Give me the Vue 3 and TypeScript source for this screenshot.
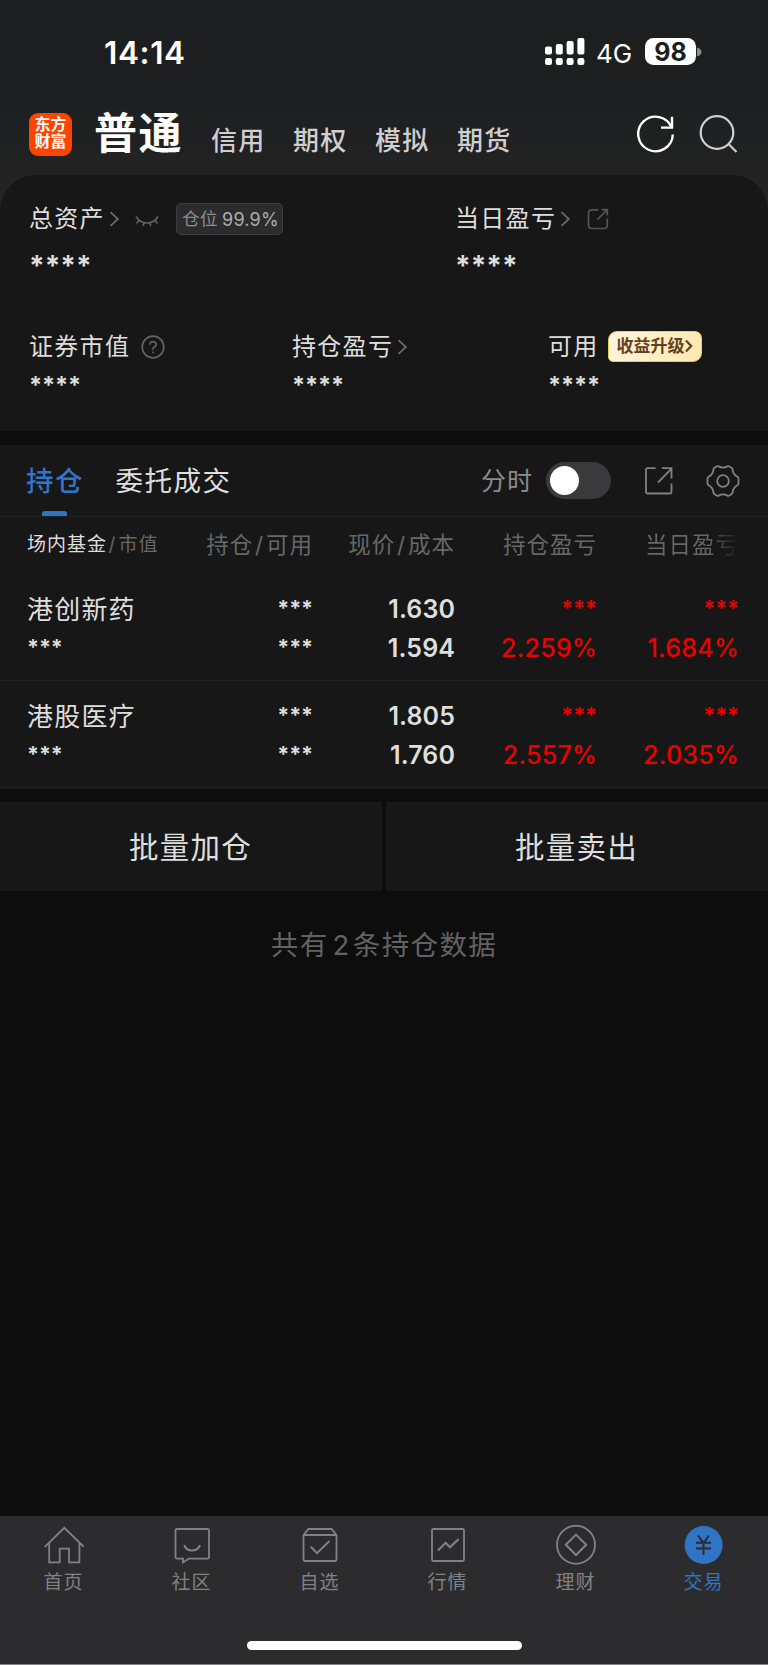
<script setup lang="ts">
interface Holding {
  name: string
  price: string
  cost: string
  total: string
  today: string
}

interface NavItem {
  key: string
  label: string
  active?: boolean
}

const accounts: string[] = ['信用', '期权', '模拟', '期货']
const columns: string[][] = [['持仓', '可用'], ['现价', '成本'], ['持仓盈亏'], ['当日盈亏']]

const holdings: Holding[] = [
  { name: '港创新药', price: '1.630', cost: '1.594', total: '2.259%', today: '1.684%' },
  { name: '港股医疗', price: '1.805', cost: '1.760', total: '2.557%', today: '2.035%' },
]

const nav: NavItem[] = [
  { key: 'home', label: '首页' },
  { key: 'community', label: '社区' },
  { key: 'watch', label: '自选' },
  { key: 'market', label: '行情' },
  { key: 'wealth', label: '理财' },
  { key: 'trade', label: '交易', active: true },
]
</script>

<template>
  <div class="screen">
    <header class="top">
      <div class="status">
        <span class="clock">14:14</span>
        <svg class="signal" width="40" height="28" viewBox="0 0 40 28" fill="#fff">
          <rect x="0" y="8.5" width="7" height="8" rx="2" />
          <rect x="10.8" y="6" width="7" height="10.5" rx="2" />
          <rect x="21.6" y="3" width="7" height="13.5" rx="2" />
          <rect x="32.4" y="0" width="7" height="16.5" rx="2" />
          <rect x="0" y="20" width="7" height="7" rx="2.2" />
          <rect x="10.8" y="20" width="7" height="7" rx="2.2" />
          <rect x="21.6" y="20" width="7" height="7" rx="2.2" />
          <rect x="32.4" y="20" width="7" height="7" rx="2.2" />
        </svg>
        <span class="network">4G</span>
        <span class="battery">98</span>
        <svg class="cap" width="5" height="10" viewBox="0 0 5 10"><path d="M0 0.5Q4.5 2 4.5 5T0 9.5Z" fill="#8b8b8d" /></svg>
      </div>
      <div class="accounts">
        <div class="logo"><span>东方</span><span>财富</span></div>
        <h1>普通</h1>
        <nav class="account-tabs">
          <span v-for="a in accounts" :key="a">{{ a }}</span>
        </nav>
        <svg class="refresh" width="40" height="40" viewBox="0 0 40 40" fill="none" stroke="#fff" stroke-width="2.4">
          <path d="M36.8 20.5A17.3 17.3 0 1 1 35.6 13.6" />
          <path d="M36 2.8V13.6H25" />
        </svg>
        <svg class="search" width="40" height="40" viewBox="0 0 40 40" fill="none" stroke="#cfcfcf" stroke-width="2.2">
          <circle cx="18" cy="17.5" r="16.3" />
          <path d="M29.5 29L37.5 37" />
        </svg>
      </div>
    </header>

    <section class="summary">
      <div class="row first">
        <div class="cell total">
          <div class="label">
            <span>总资产</span>
            <svg class="chev" width="11" height="16" viewBox="0 0 11 16"><path d="M1.5 1.2L8.8 8L1.5 14.8" /></svg>
            <svg class="eye" width="24" height="12" viewBox="0 0 24 12" fill="none" stroke="#5f5f5f" stroke-width="1.7">
              <path d="M1 1.5Q5 8 12 8T23 1.5M4.2 5.2L1.5 8.5M9 7.6L8.2 11M15 7.6L15.8 11M19.8 5.2L22.5 8.5" />
            </svg>
            <span class="badge"><i>仓位</i><b>99.9%</b></span>
          </div>
          <div class="stars lg">****</div>
        </div>
        <div class="cell today">
          <div class="label">
            <span>当日盈亏</span>
            <svg class="chev" width="11" height="16" viewBox="0 0 11 16"><path d="M1.5 1.2L8.8 8L1.5 14.8" /></svg>
            <svg class="share" width="22" height="22" viewBox="0 0 22 22" fill="none" stroke="#555" stroke-width="1.7">
              <path d="M11.5 1.9H5Q1.5 1.9 1.5 5.4V17Q1.5 20.5 5 20.5H16.8Q20.3 20.5 20.3 17V10.5M10.5 11.5L20 2M14.5 1.6H20.3V7.5" />
            </svg>
          </div>
          <div class="stars lg">****</div>
        </div>
      </div>
      <div class="row second">
        <div class="cell value">
          <div class="label">
            <span>证券市值</span>
            <svg class="help" width="24" height="24" viewBox="0 0 24 24" fill="none" stroke="#626262" stroke-width="1.7">
              <circle cx="12" cy="12" r="10.8" />
              <path d="M8.8 9.6Q9 6.6 12 6.6T15.1 9.4Q15.1 11 13.4 12T12 14.8" />
              <path d="M12 16.4V18.2" />
            </svg>
          </div>
          <div class="stars sm">****</div>
        </div>
        <div class="cell profit">
          <div class="label">
            <span>持仓盈亏</span>
            <svg class="chev" width="11" height="16" viewBox="0 0 11 16"><path d="M1.5 1.2L8.8 8L1.5 14.8" /></svg>
          </div>
          <div class="stars sm">****</div>
        </div>
        <div class="cell available">
          <div class="label">
            <span>可用</span>
            <span class="upgrade">收益升级<svg width="8" height="14" viewBox="0 0 8 14"><path d="M1 1.5L6.2 7L1 12.5" fill="none" stroke="#65401f" stroke-width="2.2" /></svg></span>
          </div>
          <div class="stars sm">****</div>
        </div>
      </div>
    </section>

    <section class="positions">
      <div class="tabs">
        <span class="tab active">持仓</span>
        <span class="tab">委托成交</span>
        <span class="switch-label">分时</span>
        <span class="switch"><i></i></span>
        <svg class="export" width="28" height="28" viewBox="0 0 28 28" fill="none" stroke="#828282" stroke-width="1.8">
          <path d="M10.5 1.2H2.5Q1 1.2 1 2.7V25Q1 26.5 2.5 26.5H25Q26.5 26.5 26.5 25V16.5M13 15.5L26.3 1.8M17 1.2H26.5V11.5" />
        </svg>
        <svg class="gear" width="34" height="34" viewBox="0 0 34 34" fill="none" stroke="#828282" stroke-width="1.8">
          <path d="M12.6 2.4Q17 4.9 21.4 2.4Q22.4 1.9 23.4 2.5L25.4 3.7Q26.5 4.4 26.6 5.6Q27 10.4 31.4 12.8Q32.5 13.4 32.5 14.6V19.4Q32.5 20.6 31.4 21.2Q27 23.6 26.6 28.4Q26.5 29.6 25.4 30.3L23.4 31.5Q22.4 32.1 21.4 31.6Q17 29.1 12.6 31.6Q11.6 32.1 10.6 31.5L8.6 30.3Q7.5 29.6 7.4 28.4Q7 23.6 2.6 21.2Q1.5 20.6 1.5 19.4V14.6Q1.5 13.4 2.6 12.8Q7 10.4 7.4 5.6Q7.5 4.4 8.6 3.7L10.6 2.5Q11.6 1.9 12.6 2.4Z" />
          <circle cx="17" cy="17" r="5.8" />
        </svg>
      </div>

      <div class="grid head">
        <span class="lead"><em>场内基金</em><i>/</i>市值</span>
        <span v-for="c in columns" :key="c[0]">{{ c[0] }}<template v-if="c[1]"><i>/</i>{{ c[1] }}</template></span>
      </div>

      <div v-for="h in holdings" :key="h.name" class="grid holding">
        <span class="name">{{ h.name }}</span>
        <span class="stars xs">***</span>
        <span class="num">{{ h.price }}</span>
        <span class="stars xs up">***</span>
        <span class="stars xs up">***</span>
        <span class="stars xs left">***</span>
        <span class="stars xs">***</span>
        <span class="num">{{ h.cost }}</span>
        <span class="num up">{{ h.total }}</span>
        <span class="num up">{{ h.today }}</span>
      </div>
    </section>

    <div class="actions">
      <button type="button">批量加仓</button>
      <button type="button">批量卖出</button>
    </div>

    <p class="count">共有<span>2</span>条持仓数据</p>

    <footer class="bottom">
      <div v-for="n in nav" :key="n.key" class="item" :class="{ active: n.active }">
        <svg width="40" height="40" viewBox="0 0 40 40" fill="none" stroke="currentColor" stroke-width="1.8">
          <path v-if="n.key === 'home'" d="M0.8 21.8L20.3 2.8L39.8 21.8M5.2 18V37.4H15.7V23.6H25V37.4H35.4V18" />
          <g v-else-if="n.key === 'community'">
            <path d="M5 4H35.5Q37 4 37 5.5V32Q37 33.6 35.5 33.6H17L11 37.4V33.6H5Q3.5 33.6 3.5 32V5.5Q3.5 4 5 4Z" />
            <path d="M12.3 20.2Q14 25.5 20 25.5T28 20.2" stroke-width="2.2" />
          </g>
          <g v-else-if="n.key === 'watch'">
            <path d="M3.5 10L8.5 4H31.5L36.5 10V34Q36.5 36 34.5 36H5.5Q3.5 36 3.5 34ZM3.5 10H36.5" />
            <path d="M10.8 21.8L17 28.2L29.5 16" stroke-width="2" />
          </g>
          <g v-else-if="n.key === 'market'">
            <rect x="4" y="4" width="32" height="32" rx="1.2" />
            <path d="M10 25.5L17.7 17.8L22 22.3L30.7 14" stroke-width="2.2" />
          </g>
          <g v-else-if="n.key === 'wealth'">
            <circle cx="20" cy="19.8" r="19" />
            <path d="M20 9.6L30.2 19.8L20 30L9.8 19.8Z" stroke-width="2" />
          </g>
          <g v-else>
            <circle cx="19.6" cy="20" r="19" fill="currentColor" stroke="none" />
            <path d="M14 10.5L19.5 18L25 10.5M19.5 18V30M12 17.8H27M12 23.6H27" stroke="#2c2c2e" stroke-width="2" />
          </g>
        </svg>
        <span>{{ n.label }}</span>
      </div>
      <div class="home-bar"></div>
    </footer>
  </div>
</template>

<style>
body {
  margin: 0;
  background: #0d0d0d;
}
</style>

<style scoped>
.screen {
  width: 768px;
  height: 1665px;
  display: flex;
  flex-direction: column;
  overflow: hidden;
  background: #0d0d0d;
  color: #dedede;
  font-family: Inter, "Noto Sans CJK SC", sans-serif;
}

.screen svg {
  display: block;
  flex: none;
}

.top {
  height: 211px;
  box-sizing: border-box;
  background: linear-gradient(#1d1e20 0, #1e1f21 100px, #232323 180px);
}

.status {
  display: flex;
  align-items: flex-start;
  height: 104px;
  box-sizing: border-box;
  padding: 38px 0 0 104px;
  color: #fff;
}

.clock {
  width: 441px;
  font-size: 31.5px;
  font-weight: 600;
  line-height: 30px;
  letter-spacing: 0.6px;
}

.network {
  width: 49px;
  margin-left: 11px;
  font-size: 26px;
  line-height: 31px;
}

.battery {
  width: 51px;
  height: 27px;
  border-radius: 8.5px;
  background: #fff;
  color: #1c1d1f;
  font-size: 25px;
  font-weight: 700;
  line-height: 28px;
  text-align: center;
}

.cap {
  margin: 9px 0 0 1px;
}

.accounts {
  display: flex;
  align-items: flex-start;
  padding-left: 29px;
}

.logo {
  width: 43px;
  height: 43px;
  margin-top: 8.5px;
  box-sizing: border-box;
  padding-top: 3px;
  border-radius: 9px;
  background: #ff4400;
  color: #fff;
  font-size: 16px;
  font-weight: 700;
  line-height: 17.5px;
  text-align: center;
}

.logo span {
  display: block;
}

h1 {
  margin: 1px 0 0 22px;
  width: 117px;
  color: #fff;
  font-size: 43px;
  font-weight: 700;
  line-height: 56px;
  letter-spacing: 1.6px;
  white-space: nowrap;
}

.account-tabs {
  display: flex;
  gap: 27.6px;
  width: 427px;
  margin-top: 17px;
  color: #cfcfcf;
  font-size: 26px;
  font-weight: 500;
  line-height: 40px;
  letter-spacing: 1.2px;
}

.refresh {
  margin: 10px 23px 0 -2px;
}

.search {
  margin-top: 11px;
}

.summary {
  height: 256px;
  margin-top: -36px;
  border-radius: 36px 36px 0 0;
  background: #171717;
  flex: none;
}

.row {
  display: flex;
  padding-left: 29px;
}

.first {
  height: 156px;
  box-sizing: border-box;
  padding-top: 28px;
}

.total { width: 426px; }
.value { width: 263px; }
.profit { width: 256px; }

.label {
  display: flex;
  align-items: center;
  height: 32px;
  font-size: 24px;
  letter-spacing: 1.3px;
  line-height: 32px;
  white-space: nowrap;
}

.chev {
  margin-left: 4px;
  fill: none;
  stroke: #6a6a6a;
  stroke-width: 1.8;
}

.eye {
  margin: 4px 0 0 15px;
}

.share {
  margin-left: 15.5px;
}

.help {
  margin-left: 11px;
}

.badge {
  display: flex;
  align-items: center;
  justify-content: center;
  gap: 4px;
  width: 105px;
  height: 30px;
  margin-left: 17px;
  border: 1px solid #3f3f41;
  border-radius: 5px;
  background: #2c2c2e;
  color: #8c8c8c;
  font-size: 17.5px;
}

.badge i {
  margin-left: 2px;
  font-style: normal;
  letter-spacing: 0.5px;
}

.badge b {
  padding-top: 2px;
  color: #adadad;
  font-size: 18px;
  font-weight: 400;
  letter-spacing: 0.2px;
}

.upgrade {
  display: flex;
  align-items: center;
  justify-content: center;
  width: 92px;
  height: 29px;
  margin: -2px 0 0 9px;
  border: 1px solid #e9cf55;
  border-radius: 9px 7px 9px 5px;
  background: linear-gradient(100deg, #fff5dc, #fde9b0);
  color: #65401f;
  font-size: 17px;
  font-weight: 700;
  letter-spacing: 0;
}

.stars {
  font-weight: 700;
  white-space: nowrap;
}

.lg {
  margin-top: 11px;
  font-size: 28px;
  line-height: 40px;
}

.sm {
  margin-top: 2px;
  font-size: 23.5px;
  line-height: 40px;
  letter-spacing: -0.1px;
}

.positions {
  height: 344px;
  margin-top: 14px;
  background: #171717;
  flex: none;
}

.tabs {
  display: flex;
  align-items: center;
  height: 72px;
  box-sizing: border-box;
  padding-left: 26px;
  border-bottom: 1px solid #202020;
}

.tab {
  position: relative;
  height: 71px;
  margin-right: 31.5px;
  color: #dedede;
  font-size: 27.5px;
  line-height: 72px;
  letter-spacing: 1.5px;
}

.tab.active {
  color: #2f74c5;
  font-weight: 500;
}

.tab.active::after {
  content: "";
  position: absolute;
  left: 16px;
  bottom: 0;
  width: 25px;
  height: 5px;
  border-radius: 3px 3px 0 0;
  background: #2f74c5;
}

.switch-label {
  margin: -3px 0 0 auto;
  color: #8b8a90;
  font-size: 25px;
  letter-spacing: 1px;
}

.switch {
  width: 57px;
  height: 29px;
  margin: 0 34px 0 13px;
  padding: 4px;
  border-radius: 19px;
  background: #3a3a3c;
}

.switch i {
  display: block;
  width: 29px;
  height: 29px;
  border-radius: 50%;
  background: #fff;
}

.gear {
  margin: 0 28px 0 33px;
}

.grid {
  display: grid;
  grid-template-columns: 160px 126px 142px 142px 142px;
  padding-left: 27px;
  text-align: right;
}

.head {
  height: 57px;
  color: #676767;
  font-size: 22.5px;
  letter-spacing: 1px;
  line-height: 56px;
  white-space: nowrap;
}

.head i {
  margin: 0 2px 0 1.5px;
  font-style: normal;
}

.head .lead {
  font-size: 19px;
  text-align: left;
  letter-spacing: 1px;
}

.head em {
  color: #dedede;
  font-style: normal;
}

.head span:last-child {
  background: linear-gradient(90deg, #676767 78%, #171717 100%);
  background-clip: text;
  color: transparent;
}

.holding {
  height: 107px;
  box-sizing: border-box;
  grid-template-rows: 39px 39px;
  padding-top: 16px;
  border-bottom: 1px solid #202020;
  line-height: 39px;
}

.name {
  font-size: 26px;
  letter-spacing: 1.2px;
  text-align: left;
}

.num {
  font-size: 25px;
  font-weight: 600;
  letter-spacing: 0.1px;
}

.num.up {
  font-weight: 500;
  letter-spacing: 0.25px;
}

.up {
  color: #ed0000;
}

.xs {
  font-size: 21.5px;
  line-height: 37px;
  letter-spacing: -0.1px;
}

.left {
  text-align: left;
}

.actions {
  display: flex;
  gap: 4px;
  margin-top: 13px;
}

.actions button {
  flex: 1;
  height: 89px;
  padding: 0 1px 4px 0;
  border: 0;
  background: #171717;
  color: #dedede;
  font-family: inherit;
  font-size: 29.5px;
  letter-spacing: 1.3px;
}

.count {
  margin: 34px 0 0;
  color: #626262;
  font-size: 27.5px;
  line-height: 40px;
  letter-spacing: 1.4px;
  text-align: center;
}

.count span {
  margin: 0 2px 0 4px;
}

.bottom {
  display: grid;
  grid-template-columns: repeat(6, 128px);
  align-content: start;
  height: 149px;
  box-sizing: border-box;
  margin-top: auto;
  padding-top: 9px;
  border-bottom: 1px solid #848487;
  background: #2c2c2e;
  flex: none;
}

.item {
  display: flex;
  flex-direction: column;
  align-items: center;
  height: 116px;
  color: #828186;
  font-size: 19px;
  letter-spacing: 1px;
}

.item span {
  margin: 5px 1px 0 0;
  line-height: 26px;
}

.item.active {
  color: #2f74c5;
}

.home-bar {
  grid-column: 1 / -1;
  justify-self: center;
  width: 275px;
  height: 9px;
  border-radius: 5px;
  background: #fff;
}
</style>
